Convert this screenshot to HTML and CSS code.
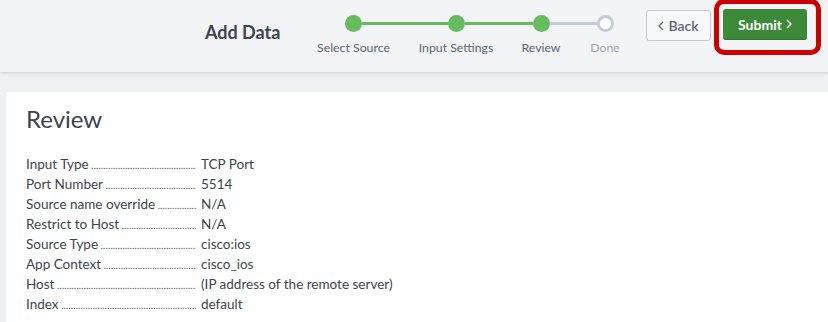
FILE: index.html
```html
<!DOCTYPE html>
<html lang="en">
<head>
    <meta charset="UTF-8">
    <title>Add Data</title>
    <link rel="stylesheet" href="styles.css">
</head>
<body>
    <div class="header">
        <h1 class="page-title">Add Data</h1>
        <div class="steps">
            <div class="step done first step-source">
                <div class="track"><span class="line"></span><span class="dot"></span><span class="line"></span></div>
                <div class="step-label">Select Source</div>
            </div>
            <div class="step done step-settings">
                <div class="track"><span class="line"></span><span class="dot"></span><span class="line"></span></div>
                <div class="step-label">Input Settings</div>
            </div>
            <div class="step done current step-review">
                <div class="track"><span class="line"></span><span class="dot"></span><span class="line"></span></div>
                <div class="step-label">Review</div>
            </div>
            <div class="step pending last step-done">
                <div class="track"><span class="line"></span><span class="dot"></span><span class="line"></span></div>
                <div class="step-label">Done</div>
            </div>
        </div>
        <button class="btn btn-back">
            <svg class="chev" width="6" height="10" viewBox="0 0 6 10"><path d="M5 1 L1 5 L5 9" fill="none" stroke="currentColor" stroke-width="1.3"/></svg>
            Back
        </button>
        <div class="highlight">
            <button class="btn btn-submit">
                Submit
                <svg class="chev" width="6" height="10" viewBox="0 0 6 10"><path d="M1 1 L5 5 L1 9" fill="none" stroke="currentColor" stroke-width="1.3"/></svg>
            </button>
        </div>
    </div>

    <div class="panel">
        <h2 class="panel-title">Review</h2>
        <div class="review-list">
            <div class="row"><span class="label">Input Type</span><span class="value">TCP Port</span></div>
            <div class="row"><span class="label">Port Number</span><span class="value">5514</span></div>
            <div class="row"><span class="label">Source name override</span><span class="value">N/A</span></div>
            <div class="row"><span class="label">Restrict to Host</span><span class="value">N/A</span></div>
            <div class="row"><span class="label">Source Type</span><span class="value">cisco:ios</span></div>
            <div class="row"><span class="label">App Context</span><span class="value">cisco_ios</span></div>
            <div class="row"><span class="label">Host</span><span class="value">(IP address of the remote server)</span></div>
            <div class="row"><span class="label">Index</span><span class="value">default</span></div>
        </div>
    </div>
</body>
</html>
```

FILE: styles.css
```css
body {
    font-family: Lato, "Open Sans", sans-serif;
    margin: 0;
    background-color: #eef0f2;
    color: #3c444d;
    overflow: hidden;
    height: 322px;
}
.header {
    height: 72px;
    background-color: #f2f4f5;
    box-shadow: 0 1px 3px rgba(0,0,0,0.15);
    display: flex;
    align-items: flex-start;
    padding-left: 205px;
    box-sizing: border-box;
}
.page-title {
    font-size: 18px;
    font-weight: 700;
    width: 97px;
    margin: 21px 0 0 0;
    white-space: nowrap;
    color: #3c444d;
}
.steps {
    display: flex;
    margin-top: 15px;
}
.step {
    display: flex;
    flex-direction: column;
    align-items: stretch;
}
.step-source { width: 103px; }
.step-settings { width: 102px; }
.step-review { width: 68px; }
.step-done { width: 60px; }
.track {
    display: flex;
    align-items: center;
    height: 17px;
}
.line {
    flex: 1;
    height: 3px;
    background-color: #66bb5e;
}
.dot {
    width: 17px;
    height: 17px;
    border-radius: 50%;
    background-color: #66bb5e;
    box-sizing: border-box;
}
.step.current .track .line:last-child,
.step.pending .track .line {
    background-color: #c3cbd4;
}
.step.pending .dot {
    background-color: #fff;
    border: 3px solid #c3cbd4;
}
.step.first .track .line:first-child,
.step.last .track .line:last-child {
    visibility: hidden;
}
.step-label {
    font-size: 12.3px;
    color: #5c6773;
    text-align: center;
    margin-top: 8px;
    white-space: nowrap;
}
.step.pending .step-label {
    color: #a1a8b0;
}
.btn {
    font-family: inherit;
    font-size: 14px;
    height: 31px;
    border-radius: 3px;
    cursor: pointer;
    display: flex;
    align-items: center;
    justify-content: center;
    gap: 4px;
    padding: 0;
}
.btn-back {
    margin: 10px 3px 0 11px;
    width: 65px;
    font-weight: 600;
    background-color: #f7f8fa;
    border: 1px solid #c3cbd4;
    color: #5c6773;
}
.highlight {
    border: 5px solid #cc0000;
    border-radius: 10px;
    padding: 5px 9px 10px 4px;
    margin-top: -1px;
}
.btn-submit {
    width: 84px;
    font-weight: 700;
    background-color: #3c8a39;
    border: none;
    border-bottom: 1px solid #2f6f2d;
    color: #fff;
}
.chev {
    display: block;
}
.panel {
    background: white;
    margin: 20px 0 0 6px;
    padding: 12px 20px 0;
    height: 230px;
    box-sizing: border-box;
    overflow: hidden;
}
.panel-title {
    font-size: 24px;
    font-weight: 400;
    margin: 0 0 20px;
    line-height: 30px;
    color: #3c444d;
}
.row {
    display: flex;
    height: 20px;
    font-size: 13.5px;
    line-height: 20px;
    color: #3c444d;
}
.label {
    width: 170px;
    margin-right: 5px;
    white-space: nowrap;
    overflow: hidden;
    flex-shrink: 0;
}
.label::after {
    content: " ...................................................................................................";
    font-size: 9px;
    letter-spacing: 0.3px;
}
.value {
    white-space: nowrap;
}
```
